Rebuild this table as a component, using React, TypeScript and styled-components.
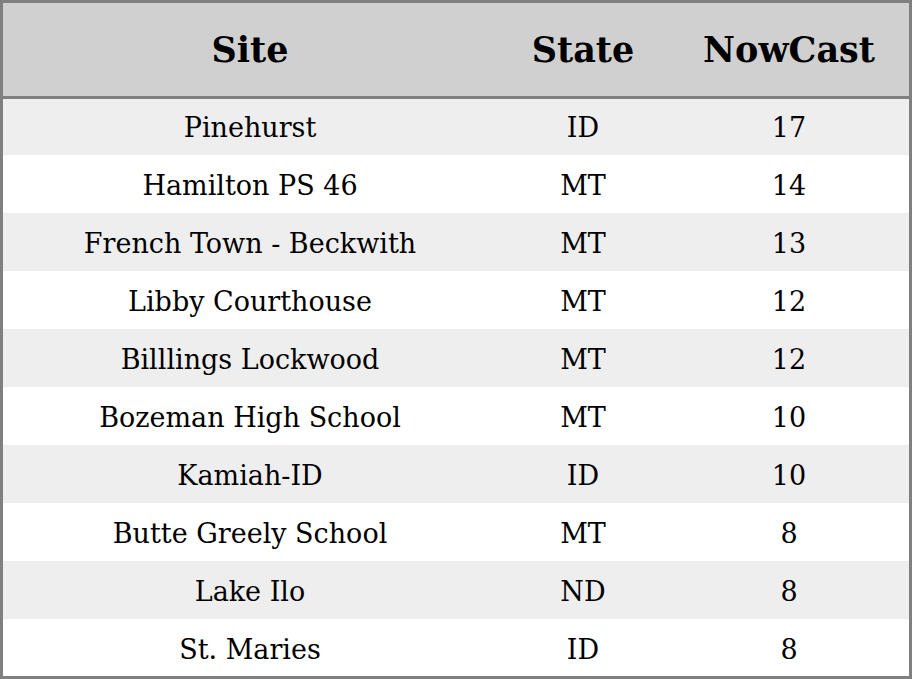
import React from "react";
import styled, { createGlobalStyle } from "styled-components";

const GlobalStyle = createGlobalStyle`
  html, body { margin: 0; padding: 0; background: #ffffff; }
  body { font-family: "DejaVu Serif", serif; }
`;

const Table = styled.table`
  width: 912px;
  border: 3px solid #808080;
  border-collapse: separate;
  border-spacing: 0;
  font-family: "DejaVu Serif", serif;
  color: #000;
  table-layout: fixed;
`;

const HeadCell = styled.th<{ $w: number }>`
  width: ${(p) => p.$w}px;
  height: 93px;
  padding: 0;
  background: #d0d0d0;
  border-bottom: 3px solid #808080;
  font-size: 35px;
  font-weight: bold;
  text-align: center;
  vertical-align: middle;
`;

const Row = styled.tr<{ $striped: boolean }>`
  height: 58px;
  background: ${(p) => (p.$striped ? "#eeeeee" : "#ffffff")};

  &:first-child {
    height: 56px;
  }
  &:last-child {
    height: 57px;
  }
`;

const Cell = styled.td`
  box-sizing: border-box;
  padding: 3px 0 0;
  font-size: 27px;
  text-align: center;
  vertical-align: middle;

  tr:first-child > & {
    padding-top: 1px;
  }
`;

const rows: [string, string, number][] = [
  ["Pinehurst", "ID", 17],
  ["Hamilton PS 46", "MT", 14],
  ["French Town - Beckwith", "MT", 13],
  ["Libby Courthouse", "MT", 12],
  ["Billlings Lockwood", "MT", 12],
  ["Bozeman High School", "MT", 10],
  ["Kamiah-ID", "ID", 10],
  ["Butte Greely School", "MT", 8],
  ["Lake Ilo", "ND", 8],
  ["St. Maries", "ID", 8],
];

export default function App() {
  return (
    <>
      <GlobalStyle />
      <Table>
        <thead>
          <tr>
            <HeadCell $w={494}>Site</HeadCell>
            <HeadCell $w={172}>State</HeadCell>
            <HeadCell $w={240}>NowCast</HeadCell>
          </tr>
        </thead>
        <tbody>
          {rows.map(([site, state, val], i) => (
            <Row key={site} $striped={i % 2 === 0}>
              <Cell>{site}</Cell>
              <Cell>{state}</Cell>
              <Cell>{val}</Cell>
            </Row>
          ))}
        </tbody>
      </Table>
    </>
  );
}
